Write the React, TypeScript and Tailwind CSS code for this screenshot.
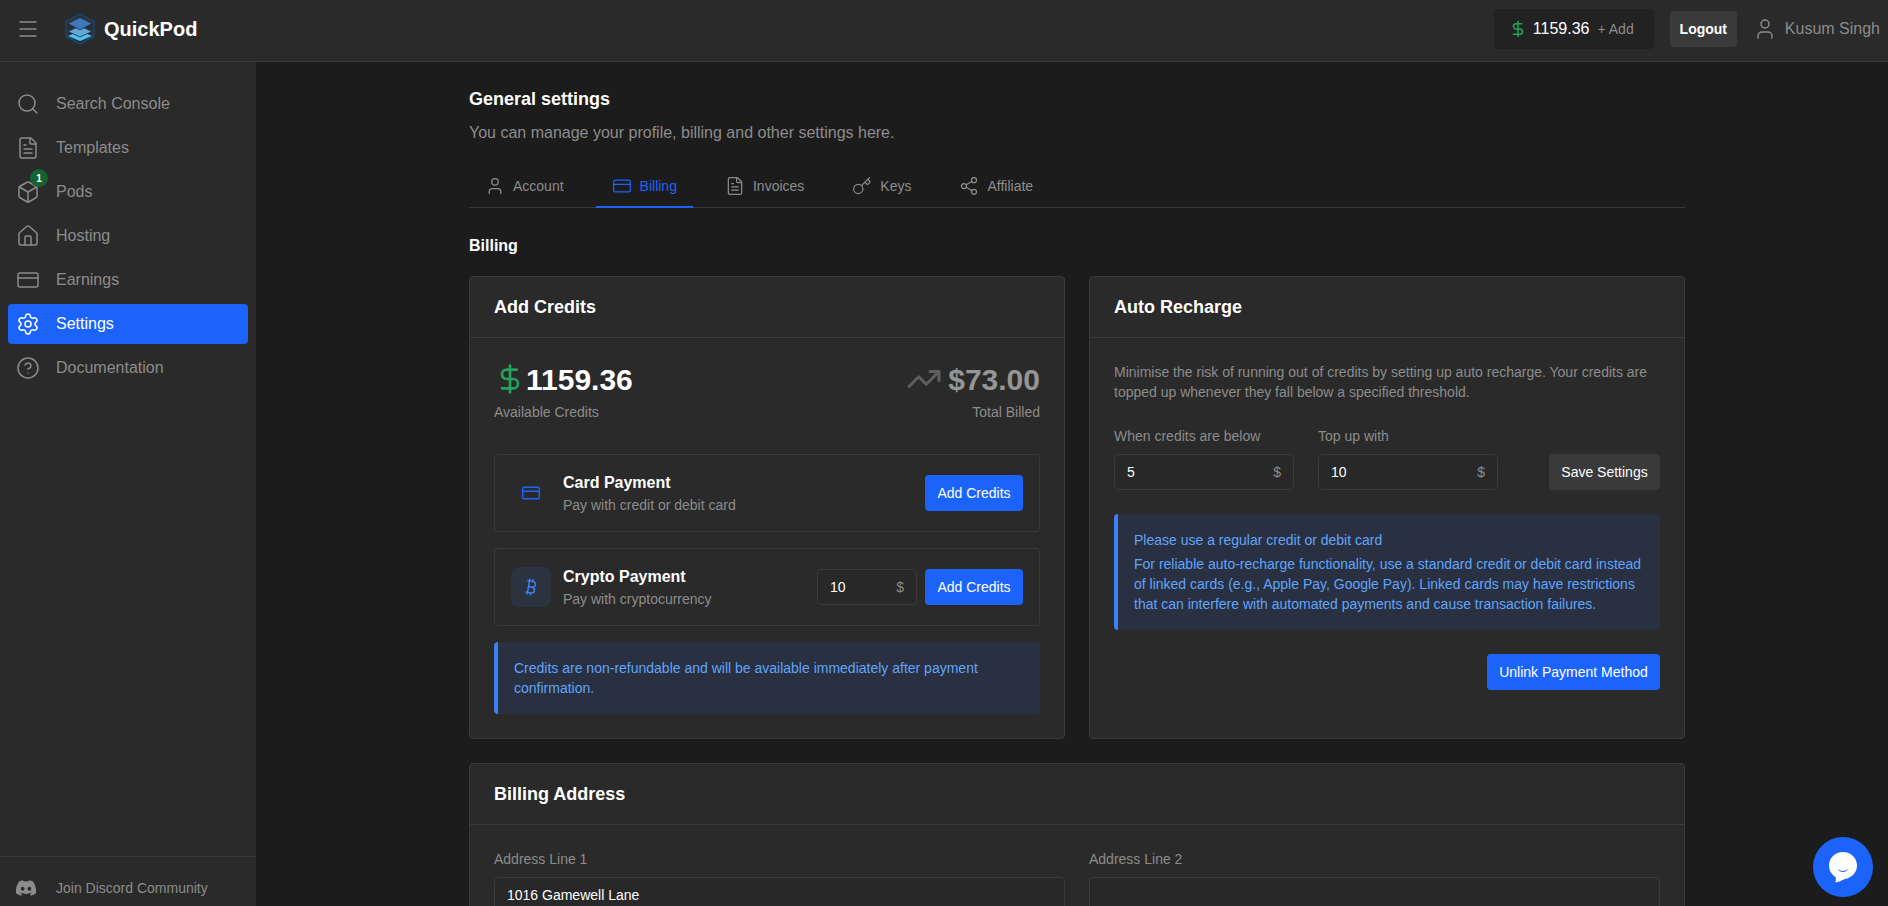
import { Search, FileText, Box, House, CreditCard, Settings, CircleHelp, Menu, User, KeyRound, Key, Share2, DollarSign, TrendingUp, Bitcoin } from "lucide-react";
import { FaDiscord } from "react-icons/fa";
import type { ReactNode } from "react";

const navItems = [
  { label: "Search Console", icon: Search },
  { label: "Templates", icon: FileText },
  { label: "Pods", icon: Box, badge: "1" },
  { label: "Hosting", icon: House },
  { label: "Earnings", icon: CreditCard },
  { label: "Settings", icon: Settings, active: true },
  { label: "Documentation", icon: CircleHelp },
];

const tabs = [
  { label: "Account", icon: User },
  { label: "Billing", icon: CreditCard, active: true },
  { label: "Invoices", icon: FileText },
  { label: "Keys", icon: Key },
  { label: "Affiliate", icon: Share2 },
];

function Logo() {
  return (
    <svg width="30" height="32" viewBox="0 0 30 32" fill="none">
      <path d="M15 1 L29 8.5 V23.5 L15 31 L1 23.5 V8.5 Z" stroke="#1f4468" strokeWidth="1.6" fill="#2a2f36" />
      <path d="M15 20 L27 25 L15 30 L3 25 Z" transform="translate(0,-2)" fill="#4cc3f1" />
      <path d="M15 13 L27 18.5 L15 24 L3 18.5 Z" fill="#5fa8dc" stroke="#2a2f36" strokeWidth="0.8" />
      <path d="M15 4.5 L27 10.5 L15 17 L3 10.5 Z" fill="#3f76bd" stroke="#2a2f36" strokeWidth="0.8" />
    </svg>
  );
}

function Sidebar() {
  return (
    <aside className="flex w-[256px] shrink-0 flex-col bg-[#2a2a2a]">
      <nav className="flex flex-1 flex-col gap-1 px-2 pt-[22px]">
        {navItems.map((item) => {
          const Icon = item.icon;
          return (
            <div
              key={item.label}
              className={`flex h-10 items-center gap-4 rounded-sm px-2 text-base ${
                item.active ? "bg-[#1c64f9] text-white" : "text-[#8c8c8c]"
              }`}
            >
              <span className="relative flex h-6 w-6 items-center justify-center">
                <Icon size={24} strokeWidth={1.5} />
                {item.badge && (
                  <span className="absolute left-[14px] top-[-11px] flex h-[18px] w-[18px] items-center justify-center rounded-full bg-[#14632f] text-[10px] font-bold text-white">
                    {item.badge}
                  </span>
                )}
              </span>
              <span>{item.label}</span>
            </div>
          );
        })}
      </nav>
      <div className="flex h-[50px] items-center gap-[19px] border-t border-[#3a3a3a] pl-[15px] pt-[12px] text-sm text-[#8c8c8c]">
        <FaDiscord size={22} />
        <span>Join Discord Community</span>
      </div>
    </aside>
  );
}

function Header() {
  return (
    <header className="box-border flex h-[62px] shrink-0 items-center justify-between border-b border-[#3a3a3a] bg-[#2a2a2a] pb-[3px] pl-4 pr-2">
      <div className="flex items-center">
        <Menu size={24} strokeWidth={1.5} className="text-[#8c8c8c]" />
        <div className="ml-[25px]">
          <Logo />
        </div>
        <span className="ml-[9px] text-[20px] font-bold text-white">QuickPod</span>
      </div>
      <div className="flex items-center">
        <div className="flex h-10 w-40 items-center rounded-sm bg-[#222222] pl-[15px]">
          <DollarSign size={18} className="text-[#22a45d]" />
          <span className="ml-[6px] text-base text-white">1159.36</span>
          <span className="ml-2 text-sm text-[#8c8c8c]">+ Add</span>
        </div>
        <div className="ml-4 flex h-9 w-[67px] items-center justify-center rounded-sm bg-[#3a3a3a] text-sm font-semibold text-white">
          Logout
        </div>
        <User size={24} strokeWidth={1.5} className="ml-4 text-[#8c8c8c]" />
        <span className="ml-2 text-base text-[#8c8c8c]">Kusum Singh</span>
      </div>
    </header>
  );
}

function Card({ title, children, className = "" }: { title: string; children: ReactNode; className?: string }) {
  return (
    <section className={`flex flex-col rounded-sm border border-[#3a3a3a] bg-[#2a2a2a] ${className}`}>
      <div className="flex h-[61px] shrink-0 items-center border-b border-[#3a3a3a] px-6 text-lg font-bold text-white">
        {title}
      </div>
      {children}
    </section>
  );
}

function Field({ value, width, unit = true }: { value: string; width: string; unit?: boolean }) {
  return (
    <div className={`flex h-9 items-center justify-between rounded-sm border border-[#3a3a3a] bg-[#282828] pl-3 pr-3 text-sm text-white ${width}`}>
      <span>{value}</span>
      {unit && <span className="text-[#8c8c8c]">$</span>}
    </div>
  );
}

function PrimaryButton({ children, width }: { children: ReactNode; width: string }) {
  return (
    <div className={`flex h-9 shrink-0 items-center justify-center rounded-sm bg-[#1c64f9] text-sm text-white ${width}`}>
      {children}
    </div>
  );
}

function PayRow({ icon, title, sub, right }: { icon: ReactNode; title: string; sub: string; right: ReactNode }) {
  return (
    <div className="flex h-[78px] items-center rounded-sm border border-[#3a3a3a] pl-4 pr-4">
      {icon}
      <div className="ml-3 flex-1">
        <div className="text-base font-bold leading-6 text-white">{title}</div>
        <div className="text-sm leading-5 text-[#8c8c8c]">{sub}</div>
      </div>
      {right}
    </div>
  );
}

function AddCredits() {
  return (
    <Card title="Add Credits">
      <div className="flex flex-1 flex-col px-6 pb-6 pt-[23px]">
        <div className="flex items-start justify-between">
          <div>
            <div className="flex h-9 items-center text-[30px] font-bold text-white">
              <DollarSign size={32} strokeWidth={2} className="text-[#22a45d]" />
              <span>1159.36</span>
            </div>
            <div className="mt-[5px] text-sm leading-5 text-[#8c8c8c]">Available Credits</div>
          </div>
          <div className="flex flex-col items-end">
            <div className="flex h-9 items-center gap-[6px] text-[30px] font-bold text-[#959595]">
              <TrendingUp size={36} strokeWidth={2} className="text-[#5e5e5e]" />
              <span>$73.00</span>
            </div>
            <div className="mt-[5px] text-sm leading-5 text-[#8c8c8c]">Total Billed</div>
          </div>
        </div>
        <div className="mt-8 flex flex-col gap-4">
          <PayRow
            icon={
              <span className="flex h-10 w-10 items-center justify-center rounded-lg">
                <CreditCard size={20} strokeWidth={1.75} className="text-[#1c64f9]" />
              </span>
            }
            title="Card Payment"
            sub="Pay with credit or debit card"
            right={<PrimaryButton width="w-[98px]">Add Credits</PrimaryButton>}
          />
          <PayRow
            icon={
              <span className="flex h-10 w-10 items-center justify-center rounded-lg bg-[#2b3240]">
                <Bitcoin size={20} strokeWidth={1.75} className="text-[#3b82f6]" />
              </span>
            }
            title="Crypto Payment"
            sub="Pay with cryptocurrency"
            right={
              <div className="flex items-center gap-2">
                <Field value="10" width="w-[100px]" />
                <PrimaryButton width="w-[98px]">Add Credits</PrimaryButton>
              </div>
            }
          />
          <div className="rounded-sm border-l-4 border-[#3b82f6] bg-[#293041] p-4 text-sm leading-5 text-[#60a5fa]">
            Credits are non-refundable and will be available immediately after payment confirmation.
          </div>
        </div>
      </div>
    </Card>
  );
}

function AutoRecharge() {
  return (
    <Card title="Auto Recharge">
      <div className="flex flex-1 flex-col px-6 pt-6">
        <p className="text-sm leading-5 text-[#8c8c8c]">
          Minimise the risk of running out of credits by setting up auto recharge. Your credits are topped up whenever they fall below a specified threshold.
        </p>
        <div className="mt-6 flex items-end justify-between">
          <div className="flex gap-6">
            <div>
              <div className="mb-2 text-sm leading-5 text-[#8c8c8c]">When credits are below</div>
              <Field value="5" width="w-[180px]" />
            </div>
            <div>
              <div className="mb-2 text-sm leading-5 text-[#8c8c8c]">Top up with</div>
              <Field value="10" width="w-[180px]" />
            </div>
          </div>
          <div className="flex h-9 w-[111px] items-center justify-center rounded-sm bg-[#3a3a3a] text-sm text-white">
            Save Settings
          </div>
        </div>
        <div className="mt-6 rounded-sm border-l-4 border-[#3b82f6] bg-[#293041] p-4 text-sm leading-5 text-[#60a5fa]">
          <div className="mb-1">Please use a regular credit or debit card</div>
          <div>
            For reliable auto-recharge functionality, use a standard credit or debit card instead of linked cards (e.g., Apple Pay, Google Pay). Linked cards may have restrictions that can interfere with automated payments and cause transaction failures.
          </div>
        </div>
        <div className="mt-6 flex justify-end">
          <PrimaryButton width="w-[173px]">Unlink Payment Method</PrimaryButton>
        </div>
      </div>
    </Card>
  );
}

function BillingAddress() {
  return (
    <Card title="Billing Address" className="mt-6">
      <div className="grid grid-cols-2 gap-6 p-6">
        <div>
          <div className="mb-2 text-sm leading-5 text-[#8c8c8c]">Address Line 1</div>
          <Field value="1016 Gamewell Lane" width="w-full" unit={false} />
        </div>
        <div>
          <div className="mb-2 text-sm leading-5 text-[#8c8c8c]">Address Line 2</div>
          <Field value="" width="w-full" unit={false} />
        </div>
      </div>
    </Card>
  );
}

function Tabs() {
  return (
    <div className="mt-[22px] flex gap-4 border-b border-[#3a3a3a]">
      {tabs.map((t) => {
        const Icon = t.icon;
        return (
          <div
            key={t.label}
            className={`-mb-px flex h-[41px] items-center gap-2 border-b-2 px-4 pb-px text-sm ${
              t.active ? "border-[#1c64f9] text-[#1c64f9]" : "border-transparent text-[#8c8c8c]"
            }`}
          >
            <Icon size={20} strokeWidth={1.5} />
            <span>{t.label}</span>
          </div>
        );
      })}
    </div>
  );
}

export default function App() {
  return (
    <div className="flex h-screen flex-col overflow-hidden bg-[#1c1c1c] font-['Liberation_Sans',Arial,sans-serif]">
      <Header />
      <div className="flex min-h-0 flex-1">
        <Sidebar />
        <main className="min-w-0 flex-1 overflow-hidden pl-[213px] pt-[23px]">
          <div className="w-[1216px]">
            <h1 className="text-lg font-bold leading-7 text-white">General settings</h1>
            <p className="mt-2 text-base leading-6 text-[#8c8c8c]">You can manage your profile, billing and other settings here.</p>
            <Tabs />
            <h2 className="mt-[26px] text-base font-bold leading-6 text-white">Billing</h2>
            <div className="mt-[18px] grid grid-cols-2 gap-6">
              <AddCredits />
              <AutoRecharge />
            </div>
            <BillingAddress />
          </div>
        </main>
      </div>
      <div className="fixed bottom-[9px] right-[15px] flex h-[60px] w-[60px] items-center justify-center rounded-full bg-[#1c64f9]">
        <svg width="30" height="32" viewBox="0 0 30 32">
          <path d="M15 1 C23 1 29 7 29 14.5 C29 22 23 27 17 28 C14 29.5 10 31 7.5 31.5 C8 29.5 8 27.5 7.5 26 C3.5 23.5 1 19.5 1 14.5 C1 7 7 1 15 1 Z" fill="#fff" />
          <path d="M10 18 C12.5 20.5 17.5 20.5 20 18 C19 22 11 22 10 18 Z" fill="#1c64f9" />
        </svg>
      </div>
    </div>
  );
}
